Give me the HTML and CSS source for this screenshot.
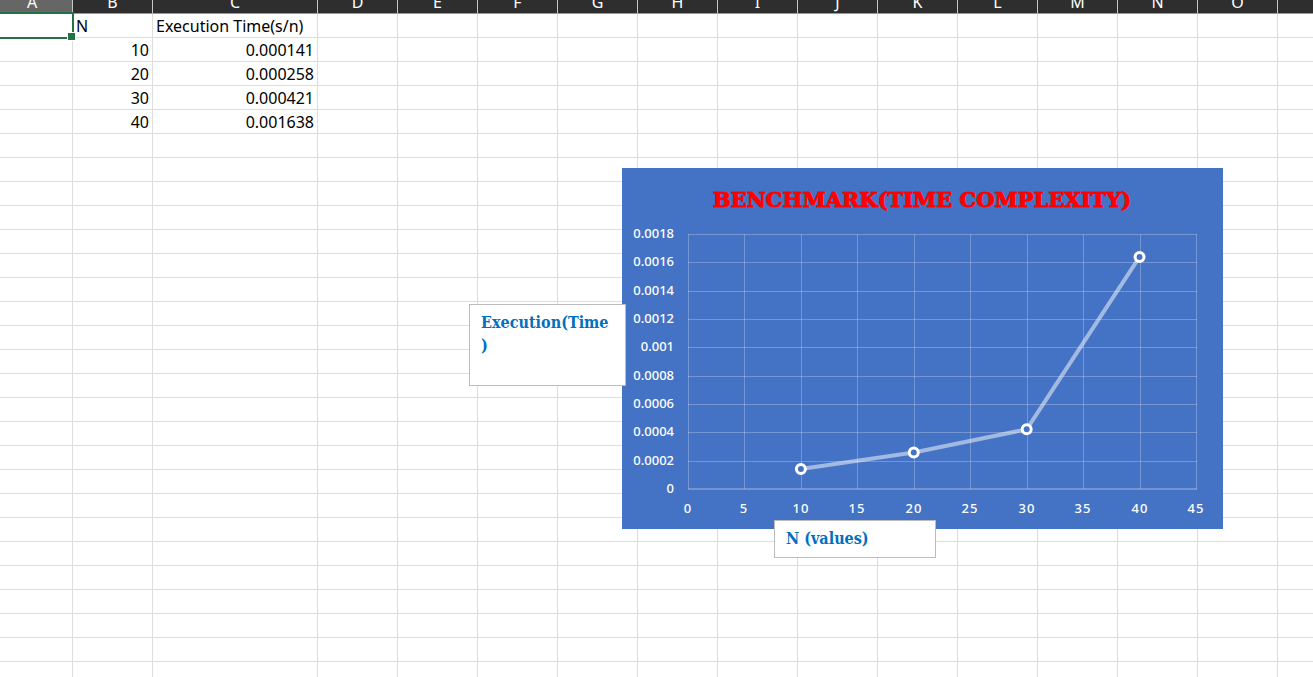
FILE: index.html
```
<!DOCTYPE html>
<html lang="en">
<head>
<meta charset="utf-8">
<title>Benchmark</title>
<link rel="stylesheet" href="styles.css">
</head>
<body>
<main class="sheet">
  <table class="grid">
    <colgroup id="cols"></colgroup>
    <thead><tr id="head"></tr></thead>
    <tbody id="rows"></tbody>
  </table>

  <figure class="chart">
    <svg class="plot" viewBox="0 0 601 361" role="img" aria-label="Benchmark(Time Complexity)">
      <text class="chart-title" x="300" y="39">BENCHMARK(TIME COMPLEXITY)</text>
      <g id="gridlines" class="gridlines"></g>
      <g id="ylabels" class="ylabels"></g>
      <g id="xlabels" class="xlabels"></g>
      <polyline id="series" class="series"/>
      <g id="markers" class="markers"></g>
    </svg>
  </figure>
  <div class="note note-y">Execution(Time)</div>
  <div class="note note-x">N (values)</div>
</main>
<script src="sheet.js"></script>
</body>
</html>
```
FILE: styles.css
```
* { box-sizing: border-box; }
body {
  margin: 0;
  background: #fff;
  color: #000;
  font-family: "Noto Sans", "Open Sans", sans-serif;
  font-size: 16px;
}
.sheet {
  position: relative;
  height: 100vh;
  overflow: hidden;
}
/* The sheet is scrolled slightly, so the header and column A are cut. */
.grid {
  table-layout: fixed;
  width: 0;
  margin: -12px 0 0 -8px;
  border-collapse: separate;
  border-spacing: 0;
}
.col { width: 80px; }
.col-a { width: 81px; }
.col-c { width: 165px; }
.grid th {
  height: 26px;
  padding: 3px 0 0;
  background: #2e2e2e;
  color: #fff;
  border-right: 1px solid #c6c6c6;
  border-bottom: 1px solid #999;
  font-weight: 400;
  line-height: 22px;
  text-align: center;
}
.grid th.active { background: #666; }
.grid td {
  height: 24px;
  padding: 1px 3px 0;
  border-right: 1px solid #dedede;
  border-bottom: 1px solid #dedede;
  line-height: 22px;
  white-space: nowrap;
}
.grid td.num { text-align: right; }
.grid td.selected { position: relative; }
.selection {
  position: absolute;
  inset: -2px -2px -2px 0;
  border: 2px solid #217346;
}
.selection::after {
  content: "";
  position: absolute;
  right: -4px;
  bottom: -4px;
  width: 7px;
  height: 7px;
  background: #217346;
  border: 1px solid #fff;
}
.chart {
  position: absolute;
  left: 622px;
  top: 168px;
  width: 601px;
  margin: 0;
  background: #4472c4;
}
.plot { display: block; width: 100%; }
.chart-title {
  fill: #f00;
  stroke: #f00;
  stroke-width: 1px;
  font: 700 21px "DejaVu Serif", serif;
  text-anchor: middle;
}
.gridlines { stroke: #fff; stroke-opacity: .25; shape-rendering: crispEdges; }
.gridlines .axis { stroke-width: 2px; }
.ylabels, .xlabels { fill: #fff; font-size: 13px; font-weight: 500; }
.ylabels { text-anchor: end; }
.xlabels { text-anchor: middle; letter-spacing: 1px; }
.series {
  fill: none;
  stroke: #fff;
  stroke-opacity: .5;
  stroke-width: 4px;
  stroke-linejoin: round;
}
.markers { fill: #4472c4; stroke: #fff; stroke-width: 3px; }
.note {
  position: absolute;
  padding: 6px 11px;
  background: #fff;
  border: 1px solid #bcbcbc;
  color: #0070c0;
  font: 700 16px/23px "DejaVu Serif Condensed", "DejaVu Serif", serif;
  overflow-wrap: anywhere;
}
.note-y { left: 469px; top: 304px; width: 157px; height: 82px; }
.note-x { left: 774px; top: 520px; width: 162px; height: 38px; }
```
FILE: sheet.js
```
const letters = "ABCDEFGHIJKLMNOPQRSTUVWXYZ".split("");
const data = [
  ["", "N", "Execution Time(s/n)"],
  ["", 10, "0.000141"],
  ["", 20, "0.000258"],
  ["", 30, "0.000421"],
  ["", 40, "0.001638"]
];

const byId = id => document.getElementById(id);

byId("cols").innerHTML = letters
  .map(l => `<col class="col col-${l.toLowerCase()}">`).join("");
byId("head").innerHTML = letters
  .map((l, i) => `<th scope="col"${i ? "" : ' class="active"'}>${l}</th>`).join("");

let rows = "";
for (let r = 0; r < 60; r++) {
  rows += "<tr>";
  for (let c = 0; c < letters.length; c++) {
    const value = data[r] && data[r][c] !== undefined ? data[r][c] : "";
    if (r === 0 && c === 0) rows += '<td class="selected"><span class="selection"></span></td>';
    else rows += `<td${r > 0 && value !== "" ? ' class="num"' : ""}>${value}</td>`;
  }
  rows += "</tr>";
}
byId("rows").innerHTML = rows;

const left = 66, right = 574, top_ = 66, bottom = 321;
const px = n => left + (right - left) * n / 45;
const py = t => bottom - (bottom - top_) * t / 0.0018;

let lines = "", xl = "", yl = "";
for (let i = 0; i <= 9; i++) {
  const x = Math.round(px(i * 5)) + 0.5;
  const t = i * 2 / 10000;
  const y = Math.round(py(t)) + 0.5;
  lines += `<line x1="${x}" x2="${x}" y1="${top_}" y2="${bottom}"/>`;
  lines += i === 0
    ? `<line class="axis" x1="${left}" x2="${right + 1}" y1="${bottom}" y2="${bottom}"/>`
    : `<line x1="${left}" x2="${right + 1}" y1="${y}" y2="${y}"/>`;
  xl += `<text x="${Math.round(px(i * 5))}" y="345">${i * 5}</text>`;
  yl += `<text x="52" y="${Math.round(py(t)) + 4}">${t}</text>`;
}
byId("gridlines").innerHTML = lines;
byId("xlabels").innerHTML = xl;
byId("ylabels").innerHTML = yl;

const points = data.slice(1).map(d => [px(d[1]), py(Number(d[2]))]);
byId("series").setAttribute("points", points.map(p => p.join(",")).join(" "));
byId("markers").innerHTML = points
  .map(p => `<circle cx="${p[0]}" cy="${p[1]}" r="4.5"/>`).join("");
```
